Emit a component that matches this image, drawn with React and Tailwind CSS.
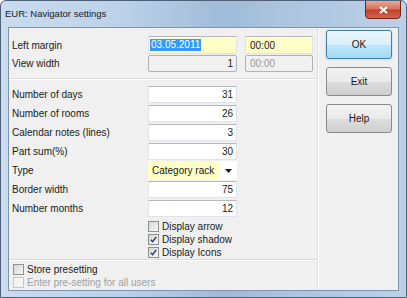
import React from 'react';

const font = "font-['Liberation_Sans',Arial,sans-serif]";

function Field({ value, align = 'right', className = '' }) {
  return (
    <div
      className={`h-[17px] w-[89px] bg-white border border-[#e2e3ea] border-t-[#b5b7bd] flex items-center px-[3px] ${
        align === 'right' ? 'justify-end' : 'justify-start'
      } ${className}`}
    >
      {value}
    </div>
  );
}

function Check({ checked, disabled, label }) {
  return (
    <div className={`flex items-center h-[13px] gap-[3px] ${disabled ? 'text-[#a0a0a0]' : 'text-[#1a1a1a]'}`}>
      <span
        className={`w-[11px] h-[11px] border flex items-center justify-center ${
          disabled
            ? 'border-[#c8c8c8] bg-[#f4f4f4]'
            : 'border-[#8e8f8f] bg-[linear-gradient(135deg,#d6d6d6,#f7f7f7)]'
        }`}
      >
        {checked && (
          <svg width="7" height="7" viewBox="0 0 8 8">
            <path d="M1 4.2 L3 6.4 L7 1.2" fill="none" stroke="#2a3f66" strokeWidth="1.6" />
          </svg>
        )}
      </span>
      <span>{label}</span>
    </div>
  );
}

function WinButton({ label, primary }) {
  return (
    <button
      className={`w-[66px] h-[29px] rounded-[3px] border text-[10px] text-[#1a1a1a] ${
        primary
          ? 'border-[#3c7fb1] bg-[linear-gradient(180deg,#eaf6fd_0%,#d9f0fc_50%,#bee6fd_51%,#a7d9f5_100%)] shadow-[0_0_2px_#7fc4ee]'
          : 'border-[#8a8a8a] bg-[linear-gradient(180deg,#f2f2f2_0%,#ebebeb_50%,#dddddd_51%,#cfcfcf_100%)]'
      }`}
    >
      {label}
    </button>
  );
}

export default function App() {
  const rows = [
    ['Number of days', '31'],
    ['Number of rooms', '26'],
    ['Calendar notes (lines)', '3'],
    ['Part sum(%)', '30'],
    ['Type', null],
    ['Border width', '75'],
    ['Number months', '12'],
  ];

  return (
    <div
      className={`${font} w-[407px] h-[298px] flex flex-col border border-[#4f6079] rounded-t-[6px] bg-[linear-gradient(90deg,#cadbee_0%,#bcd1e9_30%,#a1bbd8_55%,#adc5e0_72%,#bcd1e8_100%)] overflow-hidden`}
    >
      {/* title bar */}
      <div className="h-[27px] flex items-start justify-between pl-[4px] pr-[5px]">
        <span className="mt-[6px] text-[9.5px] text-[#1b1b1b]">EUR: Navigator settings</span>
        <div className="-mt-[1px] w-[36px] h-[19px] rounded-b-[4px] border border-[#6e2318] bg-[linear-gradient(180deg,#e9a99a_0%,#d9715f_45%,#c2402d_55%,#d2654f_100%)] flex items-center justify-center">
          <svg width="9" height="8" viewBox="0 0 9 8">
            <path d="M1 1 L8 7 M8 1 L1 7" stroke="white" strokeWidth="2" />
          </svg>
        </div>
      </div>

      {/* client area */}
      <div className="mx-[7px] mb-[6px] flex-1 flex border border-[#7d94b0] bg-[#f0f0f0] text-[10px] text-[#1a1a1a]">
        <div className="w-[309px] flex flex-col border-r border-r-[#dedede]">
          {/* panel 1 */}
          <div className="h-[51px] pl-[3px] pt-[8px] border-b border-b-[#dcdcdc] shadow-[0_1px_0_white]">
            <div className="flex items-center h-[18px]">
              <span className="w-[136px]">Left margin</span>
              <div className="h-[18px] w-[89px] bg-[#ffffc8] border border-[#e2e3ea] border-t-[#b5b7bd] flex items-center px-[1px]">
                <span className="bg-[#3399ff] text-white leading-[12px] px-[1px]">03.05.2011</span>
              </div>
              <div className="ml-[8px] h-[18px] w-[68px] bg-[#ffffc8] border border-[#e2e3ea] border-t-[#b5b7bd] flex items-center px-[4px]">
                00:00
              </div>
            </div>
            <div className="flex items-center h-[17px] mt-[1px]">
              <span className="w-[136px]">View width</span>
              <div className="h-[17px] w-[89px] rounded-[2px] border border-[#adb2b5] flex items-center justify-end px-[3px]">
                1
              </div>
              <div className="ml-[8px] h-[17px] w-[68px] rounded-[2px] border border-[#adb2b5] flex items-center px-[4px] text-[#9a9a9a]">
                00:00
              </div>
            </div>
          </div>

          {/* panel 2 */}
          <div className="flex-1 pl-[3px] pt-[7px] border-b border-b-[#dcdcdc] shadow-[0_1px_0_white] flex flex-col">
            <div className="flex flex-col gap-[2px]">
              {rows.map(([label, value]) => (
                <div key={label} className="flex items-center h-[17px]">
                  <span className="w-[136px]">{label}</span>
                  {value === null ? (
                    <div className="h-[19px] w-[89px] bg-white flex items-center">
                      <div className="h-full w-[72px] bg-[#ffffc8] flex items-center px-[4px]">Category rack</div>
                      <div className="flex-1 flex justify-center">
                        <svg width="7" height="4" viewBox="0 0 7 4">
                          <path d="M0 0 L7 0 L3.5 4 Z" fill="#1a1a1a" />
                        </svg>
                      </div>
                    </div>
                  ) : (
                    <Field value={value} />
                  )}
                </div>
              ))}
            </div>
            <div className="ml-[136px] mt-[3px] flex flex-col">
              <Check label="Display arrow" />
              <Check label="Display shadow" checked />
              <Check label="Display Icons" checked />
            </div>
          </div>

          {/* panel 3 */}
          <div className="h-[30px] pl-[4px] pt-[3px] flex flex-col">
            <Check label="Store presetting" />
            <Check label="Enter pre-setting for all users" disabled />
          </div>
        </div>

        {/* buttons */}
        <div className="flex-1 border-l border-l-white flex flex-col pl-[7px] pt-[2px] gap-[8px]">
          <WinButton label="OK" primary />
          <WinButton label="Exit" />
          <WinButton label="Help" />
        </div>
      </div>
    </div>
  );
}
